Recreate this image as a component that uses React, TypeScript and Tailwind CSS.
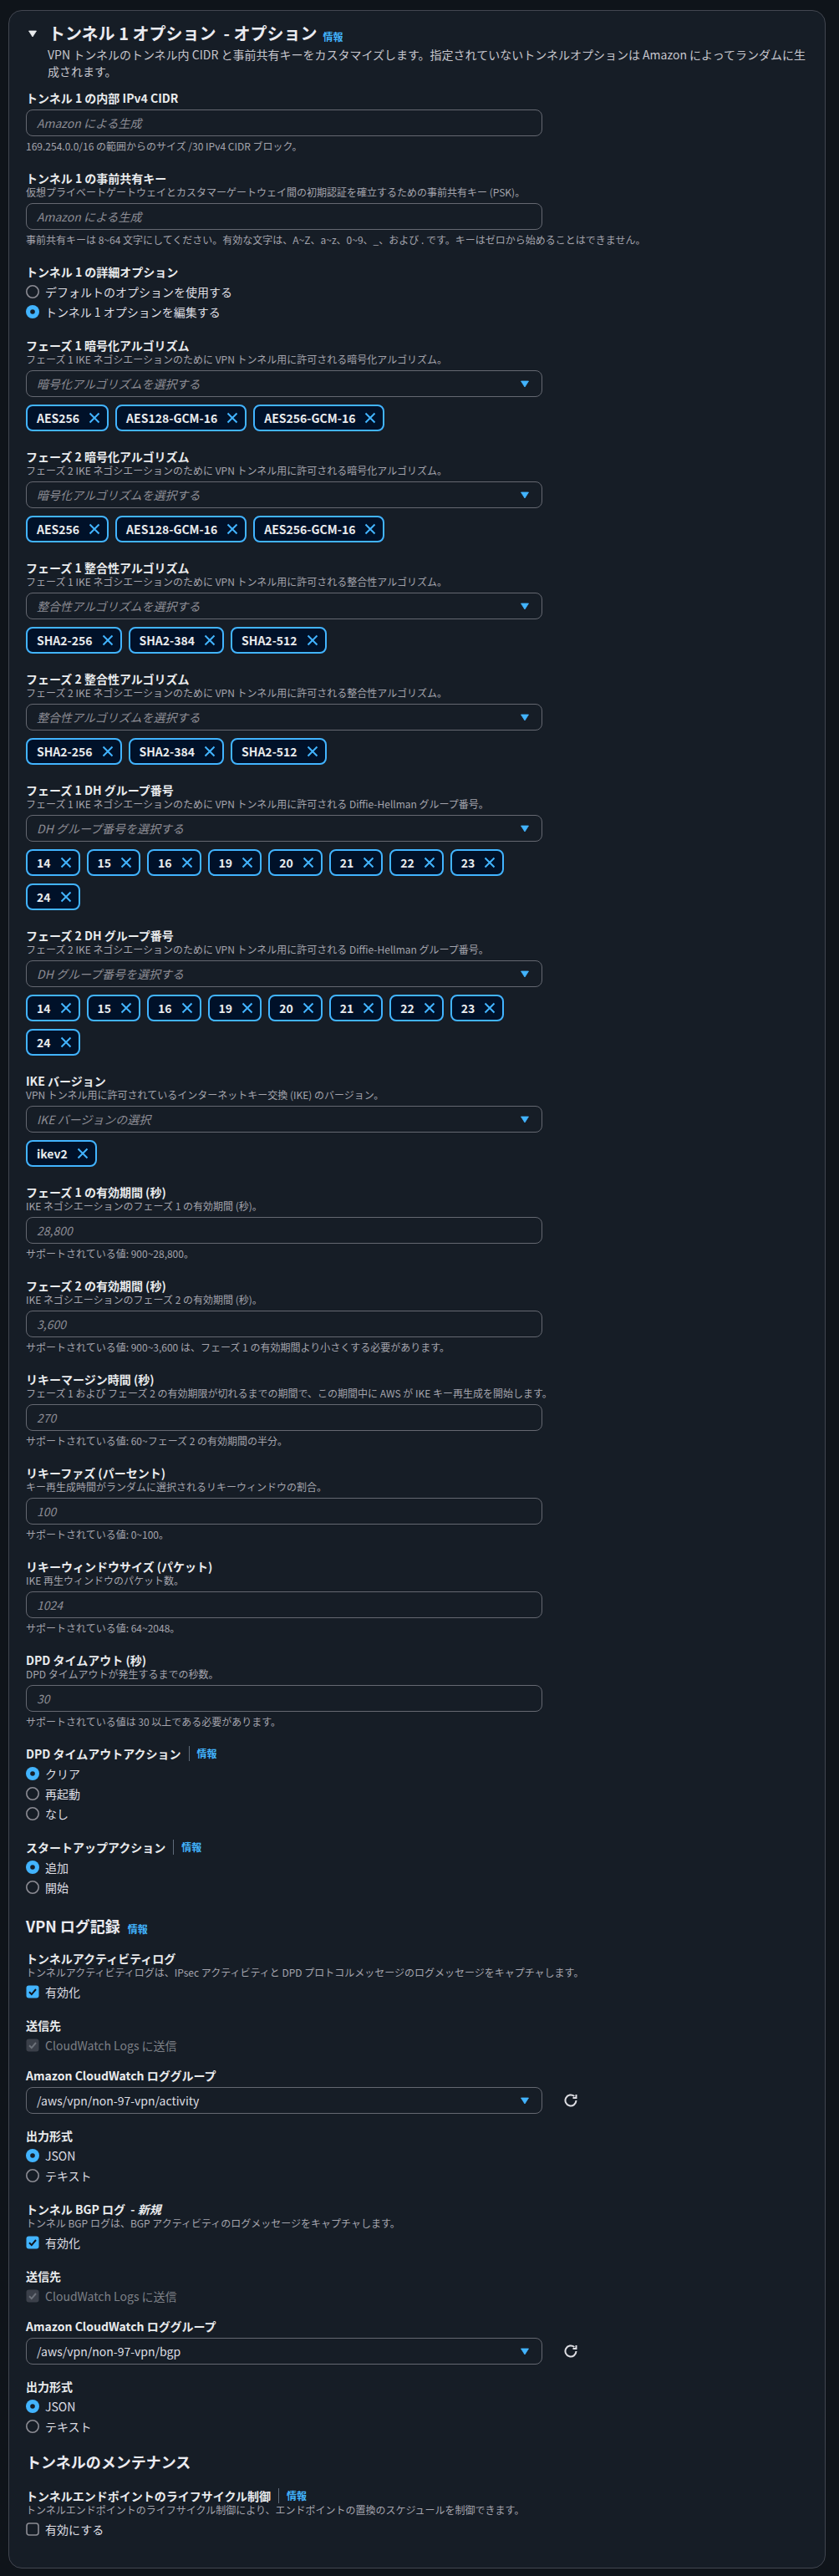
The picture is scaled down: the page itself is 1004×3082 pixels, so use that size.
import React from "react";

const algos = ["AES256", "AES128-GCM-16", "AES256-GCM-16"];
const integrity = ["SHA2-256", "SHA2-384", "SHA2-512"];
const dhGroups = ["14", "15", "16", "19", "20", "21", "22", "23", "24"];

function Info() {
  return <span className="text-[12px] font-bold leading-[18px] text-[#42b4ff]">情報</span>;
}

function Label({ children, info }: { children: React.ReactNode; info?: boolean }) {
  return (
    <div className="flex items-center text-[14px] font-bold leading-[18px] text-[#e9ebed]">
      <span>{children}</span>
      {info && (
        <>
          <span className="mx-[9px] h-[18px] w-px bg-[#5f6b7a]" />
          <Info />
        </>
      )}
    </div>
  );
}

function Desc({ children }: { children: React.ReactNode }) {
  return <div className="text-[12px] leading-[16px] text-[#a4a4ad]">{children}</div>;
}

function Help({ children }: { children: React.ReactNode }) {
  return <div className="mt-[4px] text-[12px] leading-[16px] text-[#a4a4ad]">{children}</div>;
}

function Caret({ color }: { color: string }) {
  return (
    <svg width="16" height="16" viewBox="0 0 16 16" className="shrink-0">
      <path d="M3.5 5h9L8 12z" fill={color} strokeLinejoin="round" stroke={color} strokeWidth="0.8" />
    </svg>
  );
}

function Input({ value }: { value: string }) {
  return (
    <div className="mt-[5px] flex h-[32px] w-[618px] items-center rounded-[8px] border border-[#656871] px-[12px] text-[14px] italic text-[#8c8c94]">
      {value}
    </div>
  );
}

function Select({ value, placeholder = true }: { value: string; placeholder?: boolean }) {
  return (
    <div
      className={
        placeholder
          ? "flex h-[32px] w-[618px] items-center justify-between rounded-[8px] border border-[#656871] pl-[12px] pr-[12px] text-[14px] italic text-[#8c8c94]"
          : "flex h-[32px] w-[618px] items-center justify-between rounded-[8px] border border-[#656871] pl-[12px] pr-[12px] text-[14px] text-[#dedee3]"
      }
    >
      <span>{value}</span>
      <Caret color="#42b4ff" />
    </div>
  );
}

function Token({ text }: { text: string }) {
  return (
    <div className="flex h-[32px] items-center gap-[10px] rounded-[8px] border-2 border-[#42b4ff] bg-[#001129] pl-[11px] pr-[7px] text-[14px] font-bold leading-[20px] text-[#e9ebed]">
      <span>{text}</span>
      <svg width="16" height="16" viewBox="0 0 16 16" fill="none" stroke="#42b4ff" strokeWidth="2">
        <path d="M2.5 2.5l11 11M13.5 2.5l-11 11" />
      </svg>
    </div>
  );
}

function MultiSelect({ placeholder, tokens }: { placeholder: string; tokens: string[] }) {
  return (
    <>
      <div className="mt-[5px]">
        <Select value={placeholder} />
      </div>
      <div className="mt-[9px] flex w-[618px] flex-wrap gap-x-[8px] gap-y-[9px]">
        {tokens.map((t) => (
          <Token key={t} text={t} />
        ))}
      </div>
    </>
  );
}

function Radio({ label, checked, first }: { label: string; checked?: boolean; first?: boolean }) {
  return (
    <div
      className={
        first
          ? "mt-[5px] flex h-[20px] items-center gap-[7px] text-[14px] text-[#dedee3]"
          : "mt-[4px] flex h-[20px] items-center gap-[7px] text-[14px] text-[#dedee3]"
      }
    >
      <svg width="16" height="16" viewBox="0 0 16 16" className="shrink-0">
        {checked ? (
          <>
            <circle cx="8" cy="8" r="8" fill="#42b4ff" />
            <circle cx="8" cy="8" r="2.8" fill="#161d26" />
          </>
        ) : (
          <circle cx="8" cy="8" r="7.2" fill="none" stroke="#8c8c94" strokeWidth="1.6" />
        )}
      </svg>
      <span>{label}</span>
    </div>
  );
}

function Checkbox({ label, state }: { label: string; state: "on" | "off" | "disabled" }) {
  return (
    <div
      className={
        state === "disabled"
          ? "mt-[5px] flex h-[20px] items-center gap-[7px] text-[14px] text-[#7d8087]"
          : "mt-[5px] flex h-[20px] items-center gap-[7px] text-[14px] text-[#dedee3]"
      }
    >
      <svg width="16" height="16" viewBox="0 0 16 16" className="shrink-0">
        {state === "on" && (
          <>
            <rect x="0.5" y="0.5" width="15" height="15" rx="3" fill="#42b4ff" />
            <path d="M4 8.3l2.8 2.8L12 5" fill="none" stroke="#0f141a" strokeWidth="2" />
          </>
        )}
        {state === "disabled" && (
          <>
            <rect x="0.5" y="0.5" width="15" height="15" rx="3" fill="#3b404a" />
            <path d="M4 8.3l2.8 2.8L12 5" fill="none" stroke="#6d727b" strokeWidth="2" />
          </>
        )}
        {state === "off" && (
          <rect x="1" y="1" width="14" height="14" rx="3" fill="none" stroke="#8c8c94" strokeWidth="1.6" />
        )}
      </svg>
      <span>{label}</span>
    </div>
  );
}

function Refresh() {
  return (
    <svg width="16" height="16" viewBox="0 0 16 16" fill="none" stroke="#dedee3" strokeWidth="2" className="ml-[26px] shrink-0">
      <path d="M14.5 8a6.5 6.5 0 1 1-2.2-4.9" />
      <path d="M14.5 1v4h-4" />
    </svg>
  );
}

function LogGroup({ value }: { value: string }) {
  return (
    <div className="mt-[17px]">
      <Label>Amazon CloudWatch ロググループ</Label>
      <div className="mt-[5px] flex items-center">
        <Select value={value} placeholder={false} />
        <Refresh />
      </div>
    </div>
  );
}

export default function App() {
  return (
    <div className="min-h-[3082px] bg-[#0f141a] pt-[12px] font-['Noto_Sans_CJK_JP',sans-serif]">
      <div className="ml-[10px] w-[978px] rounded-[16px] border border-[#424650] bg-[#161d26] px-[20px] pb-[36px] pt-[15px]">
        <div className="flex h-[24px] items-center">
          <span className="w-[27px]">
            <Caret color="#e9ebed" />
          </span>
          <h2 className="text-[20px] font-bold leading-[24px] text-[#ebebf0]">
            トンネル 1 オプション&nbsp; - オプション
          </h2>
          <span className="ml-[7px] pt-[4px]">
            <Info />
          </span>
        </div>
        <p className="mt-[3px] pl-[26px] text-[14px] leading-[20px] text-[#c6c6cd]">
          VPN トンネルのトンネル内 CIDR と事前共有キーをカスタマイズします。指定されていないトンネルオプションは Amazon によってランダムに生成されます。
        </p>

        <div className="mt-[13px]">
          <Label>トンネル 1 の内部 IPv4 CIDR</Label>
          <Input value="Amazon による生成" />
          <Help>169.254.0.0/16 の範囲からのサイズ /30 IPv4 CIDR ブロック。</Help>
        </div>

        <div className="mt-[21px]">
          <Label>トンネル 1 の事前共有キー</Label>
          <Desc>仮想プライベートゲートウェイとカスタマーゲートウェイ間の初期認証を確立するための事前共有キー (PSK)。</Desc>
          <Input value="Amazon による生成" />
          <Help>
            事前共有キーは 8~64 文字にしてください。有効な文字は、A~Z、a~z、0~9、_、および . です。キーはゼロから始めることはできません。
          </Help>
        </div>

        <div className="mt-[21px]">
          <Label>トンネル 1 の詳細オプション</Label>
          <Radio first label="デフォルトのオプションを使用する" />
          <Radio checked label="トンネル 1 オプションを編集する" />
        </div>

        <div className="mt-[21px]">
          <Label>フェーズ 1 暗号化アルゴリズム</Label>
          <Desc>フェーズ 1 IKE ネゴシエーションのために VPN トンネル用に許可される暗号化アルゴリズム。</Desc>
          <MultiSelect placeholder="暗号化アルゴリズムを選択する" tokens={algos} />
        </div>

        <div className="mt-[21px]">
          <Label>フェーズ 2 暗号化アルゴリズム</Label>
          <Desc>フェーズ 2 IKE ネゴシエーションのために VPN トンネル用に許可される暗号化アルゴリズム。</Desc>
          <MultiSelect placeholder="暗号化アルゴリズムを選択する" tokens={algos} />
        </div>

        <div className="mt-[21px]">
          <Label>フェーズ 1 整合性アルゴリズム</Label>
          <Desc>フェーズ 1 IKE ネゴシエーションのために VPN トンネル用に許可される整合性アルゴリズム。</Desc>
          <MultiSelect placeholder="整合性アルゴリズムを選択する" tokens={integrity} />
        </div>

        <div className="mt-[21px]">
          <Label>フェーズ 2 整合性アルゴリズム</Label>
          <Desc>フェーズ 2 IKE ネゴシエーションのために VPN トンネル用に許可される整合性アルゴリズム。</Desc>
          <MultiSelect placeholder="整合性アルゴリズムを選択する" tokens={integrity} />
        </div>

        <div className="mt-[21px]">
          <Label>フェーズ 1 DH グループ番号</Label>
          <Desc>フェーズ 1 IKE ネゴシエーションのために VPN トンネル用に許可される Diffie-Hellman グループ番号。</Desc>
          <MultiSelect placeholder="DH グループ番号を選択する" tokens={dhGroups} />
        </div>

        <div className="mt-[21px]">
          <Label>フェーズ 2 DH グループ番号</Label>
          <Desc>フェーズ 2 IKE ネゴシエーションのために VPN トンネル用に許可される Diffie-Hellman グループ番号。</Desc>
          <MultiSelect placeholder="DH グループ番号を選択する" tokens={dhGroups} />
        </div>

        <div className="mt-[21px]">
          <Label>IKE バージョン</Label>
          <Desc>VPN トンネル用に許可されているインターネットキー交換 (IKE) のバージョン。</Desc>
          <MultiSelect placeholder="IKE バージョンの選択" tokens={["ikev2"]} />
        </div>

        <div className="mt-[21px]">
          <Label>フェーズ 1 の有効期間 (秒)</Label>
          <Desc>IKE ネゴシエーションのフェーズ 1 の有効期間 (秒)。</Desc>
          <Input value="28,800" />
          <Help>サポートされている値: 900~28,800。</Help>
        </div>

        <div className="mt-[21px]">
          <Label>フェーズ 2 の有効期間 (秒)</Label>
          <Desc>IKE ネゴシエーションのフェーズ 2 の有効期間 (秒)。</Desc>
          <Input value="3,600" />
          <Help>サポートされている値: 900~3,600 は、フェーズ 1 の有効期間より小さくする必要があります。</Help>
        </div>

        <div className="mt-[21px]">
          <Label>リキーマージン時間 (秒)</Label>
          <Desc>フェーズ 1 および フェーズ 2 の有効期限が切れるまでの期間で、この期間中に AWS が IKE キー再生成を開始します。</Desc>
          <Input value="270" />
          <Help>サポートされている値: 60~フェーズ 2 の有効期間の半分。</Help>
        </div>

        <div className="mt-[21px]">
          <Label>リキーファズ (パーセント)</Label>
          <Desc>キー再生成時間がランダムに選択されるリキーウィンドウの割合。</Desc>
          <Input value="100" />
          <Help>サポートされている値: 0~100。</Help>
        </div>

        <div className="mt-[21px]">
          <Label>リキーウィンドウサイズ (パケット)</Label>
          <Desc>IKE 再生ウィンドウのパケット数。</Desc>
          <Input value="1024" />
          <Help>サポートされている値: 64~2048。</Help>
        </div>

        <div className="mt-[21px]">
          <Label>DPD タイムアウト (秒)</Label>
          <Desc>DPD タイムアウトが発生するまでの秒数。</Desc>
          <Input value="30" />
          <Help>サポートされている値は 30 以上である必要があります。</Help>
        </div>

        <div className="mt-[21px]">
          <Label info>DPD タイムアウトアクション</Label>
          <Radio first checked label="クリア" />
          <Radio label="再起動" />
          <Radio label="なし" />
        </div>

        <div className="mt-[21px]">
          <Label info>スタートアップアクション</Label>
          <Radio first checked label="追加" />
          <Radio label="開始" />
        </div>

        <div className="mt-[24px] flex h-[24px] items-center">
          <h3 className="text-[18px] font-bold leading-[24px] text-[#ebebf0]">VPN ログ記録</h3>
          <span className="ml-[9px] pt-[3px]">
            <Info />
          </span>
        </div>

        <div className="mt-[18px]">
          <Label>トンネルアクティビティログ</Label>
          <Desc>トンネルアクティビティログは、IPsec アクティビティと DPD プロトコルメッセージのログメッセージをキャプチャします。</Desc>
          <Checkbox state="on" label="有効化" />
        </div>

        <div className="mt-[21px]">
          <Label>送信先</Label>
          <Checkbox state="disabled" label="CloudWatch Logs に送信" />
        </div>
        <LogGroup value="/aws/vpn/non-97-vpn/activity" />
        <div className="mt-[17px]">
          <Label>出力形式</Label>
          <Radio first checked label="JSON" />
          <Radio label="テキスト" />
        </div>

        <div className="mt-[21px]">
          <Label>
            トンネル BGP ログ&nbsp; - <span className="italic">新規</span>
          </Label>
          <Desc>トンネル BGP ログは、BGP アクティビティのログメッセージをキャプチャします。</Desc>
          <Checkbox state="on" label="有効化" />
        </div>

        <div className="mt-[21px]">
          <Label>送信先</Label>
          <Checkbox state="disabled" label="CloudWatch Logs に送信" />
        </div>
        <LogGroup value="/aws/vpn/non-97-vpn/bgp" />
        <div className="mt-[17px]">
          <Label>出力形式</Label>
          <Radio first checked label="JSON" />
          <Radio label="テキスト" />
        </div>

        <h3 className="mt-[20px] text-[18px] font-bold leading-[24px] text-[#ebebf0]">トンネルのメンテナンス</h3>

        <div className="mt-[20px]">
          <Label info>トンネルエンドポイントのライフサイクル制御</Label>
          <Desc>トンネルエンドポイントのライフサイクル制御により、エンドポイントの置換のスケジュールを制御できます。</Desc>
          <Checkbox state="off" label="有効にする" />
        </div>
      </div>
    </div>
  );
}
